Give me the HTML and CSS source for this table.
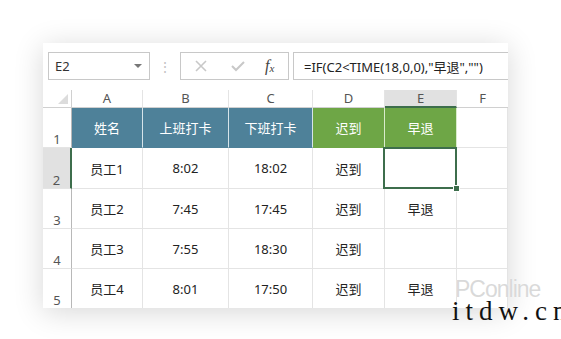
FILE: index.html
```html
<!DOCTYPE html>
<html lang="zh-CN">
<head>
  <meta charset="UTF-8">
  <title>迟到早退</title>
  <link rel="stylesheet" href="styles.css">
</head>
<body>
  <div class="sheet">
    <div class="toolbar">
      <div class="name-box">
        <span>E2</span>
        <span class="name-box__arrow"></span>
      </div>
      <div class="toolbar__dots">⋮</div>
      <div class="fx-buttons">
        <svg class="fx-buttons__icon" width="14" height="14" viewBox="0 0 14 14">
          <path d="M2 2 L12 12 M12 2 L2 12" stroke="#c8c8c8" stroke-width="1.6" fill="none"/>
        </svg>
        <svg class="fx-buttons__icon" width="16" height="14" viewBox="0 0 16 14">
          <path d="M2 7 L6 11 L14 3" stroke="#c8c8c8" stroke-width="2" fill="none"/>
        </svg>
        <span class="fx-buttons__fx">f<sub>x</sub></span>
      </div>
      <div class="formula">=IF(C2&lt;TIME(18,0,0),"早退","")</div>
    </div>

    <div class="grid">
      <div class="corner"><span class="corner__tri"></span></div>
      <div class="col-head">A</div>
      <div class="col-head">B</div>
      <div class="col-head">C</div>
      <div class="col-head">D</div>
      <div class="col-head col-head--active">E</div>
      <div class="col-head col-head--last">F</div>

      <div class="row-head">1</div>
      <div class="cell cell--blue">姓名</div>
      <div class="cell cell--blue">上班打卡</div>
      <div class="cell cell--blue">下班打卡</div>
      <div class="cell cell--green">迟到</div>
      <div class="cell cell--green">早退</div>
      <div class="cell"></div>

      <div class="row-head row-head--active">2</div>
      <div class="cell">员工1</div>
      <div class="cell">8:02</div>
      <div class="cell">18:02</div>
      <div class="cell">迟到</div>
      <div class="cell cell--selected"></div>
      <div class="cell"></div>

      <div class="row-head">3</div>
      <div class="cell">员工2</div>
      <div class="cell">7:45</div>
      <div class="cell">17:45</div>
      <div class="cell">迟到</div>
      <div class="cell">早退</div>
      <div class="cell"></div>

      <div class="row-head">4</div>
      <div class="cell">员工3</div>
      <div class="cell">7:55</div>
      <div class="cell">18:30</div>
      <div class="cell">迟到</div>
      <div class="cell"></div>
      <div class="cell"></div>

      <div class="row-head">5</div>
      <div class="cell">员工4</div>
      <div class="cell">8:01</div>
      <div class="cell">17:50</div>
      <div class="cell">迟到</div>
      <div class="cell">早退</div>
      <div class="cell"></div>
    </div>
  </div>

  <div class="watermark">
    <div class="watermark__logo">PConline</div>
    <div class="watermark__site">itdw.cn</div>
  </div>
</body>
</html>
```

FILE: styles.css
```css
:root {
  --grid-line: #e4e4e4;
  --head-line: #d0d0d0;
  --head-text: #555;
  --cell-text: #222;
  --blue-fill: #4e8199;
  --green-fill: #6ea646;
  --select: #3d6e4c;
  --active-head: #e1e1e1;
}

body {
  margin: 0;
  background: #fff;
  font-family: "Noto Sans", "Noto Sans CJK SC", sans-serif;
  width: 561px;
  height: 339px;
  overflow: hidden;
  position: relative;
}

.sheet {
  margin: 43px 0 0 43px;
  width: 465px;
  height: 265px;
  background: #fff;
  box-shadow: 0 4px 28px rgba(0, 0, 0, 0.16);
  overflow: hidden;
}

/* formula bar */
.toolbar {
  display: flex;
  align-items: center;
  height: 28px;
  padding: 9px 0 10px 5px;
}

.name-box {
  width: 102px;
  height: 28px;
  box-sizing: border-box;
  border: 1px solid #c8c8c8;
  display: flex;
  align-items: center;
  justify-content: space-between;
  padding: 0 7px 0 6px;
  font-size: 13px;
  color: #333;
}

.name-box__arrow {
  width: 0;
  height: 0;
  border-left: 4px solid transparent;
  border-right: 4px solid transparent;
  border-top: 4px solid #777;
}

.toolbar__dots {
  width: 30px;
  text-align: center;
  color: #c4c4c4;
  font-size: 14px;
}

.fx-buttons {
  width: 109px;
  height: 28px;
  box-sizing: border-box;
  border: 1px solid #c8c8c8;
  display: flex;
  align-items: center;
  padding-left: 13px;
  gap: 22px;
}

.fx-buttons__fx {
  font-family: "Liberation Serif", serif;
  font-style: italic;
  font-size: 16px;
  color: #444;
  margin-left: -3px;
}

.fx-buttons__fx sub {
  font-size: 11px;
  vertical-align: -1px;
}

.formula {
  flex: 1;
  height: 28px;
  box-sizing: border-box;
  border: 1px solid #c8c8c8;
  border-right: none;
  margin-left: 4px;
  padding-left: 10px;
  display: flex;
  align-items: center;
  font-size: 13px;
  color: #222;
  white-space: nowrap;
}

/* sheet grid */
.grid {
  display: grid;
  grid-template-columns: 29px 71px 86px 84px 72px 72px 51px;
  grid-template-rows: 18px 40px 41px 40px 40px 40px;
}

.corner {
  border-right: 1px solid var(--head-line);
  border-bottom: 1px solid var(--head-line);
  position: relative;
}

.corner__tri {
  position: absolute;
  right: 3px;
  bottom: 3px;
  width: 0;
  height: 0;
  border-left: 10px solid transparent;
  border-bottom: 10px solid #dcdcdc;
}

.col-head {
  border-right: 1px solid var(--grid-line);
  border-bottom: 1px solid var(--head-line);
  font-size: 13px;
  color: var(--head-text);
  display: flex;
  align-items: center;
  justify-content: center;
  line-height: 1;
}

.col-head--active {
  background: var(--active-head);
  border-bottom: 2px solid var(--select);
}

.col-head--last {
  border-right: none;
}

.row-head {
  border-right: 1px solid #b8b8b8;
  border-bottom: 1px solid var(--grid-line);
  font-size: 13px;
  color: var(--head-text);
  display: flex;
  align-items: flex-end;
  justify-content: center;
  padding-bottom: 1px;
  line-height: 1;
}

.row-head--active {
  background: var(--active-head);
  border-right: 2px solid var(--select);
}

.cell {
  border-right: 1px solid var(--grid-line);
  border-bottom: 1px solid var(--grid-line);
  font-size: 13px;
  color: var(--cell-text);
  display: flex;
  align-items: center;
  justify-content: center;
}

.cell--blue {
  background: var(--blue-fill);
  color: #fff;
  border-right-color: #d6e4ea;
  border-bottom-color: var(--blue-fill);
}

.cell--green {
  background: var(--green-fill);
  color: #fff;
  border-right-color: #d9ebcc;
  border-bottom-color: var(--green-fill);
}

.cell--selected {
  position: relative;
}

.cell--selected::before {
  content: "";
  position: absolute;
  left: -2px;
  top: -1px;
  right: -1px;
  bottom: -1px;
  border: 2px solid var(--select);
}

.cell--selected::after {
  content: "";
  position: absolute;
  right: -4px;
  bottom: -4px;
  width: 5px;
  height: 5px;
  background: var(--select);
  border: 1px solid #fff;
}

/* site watermark */
.watermark {
  position: absolute;
  left: 452px;
  top: 279px;
}

.watermark__logo {
  margin-left: 3px;
  font-family: "Liberation Sans", sans-serif;
  font-size: 23px;
  color: rgba(205, 205, 205, 0.75);
  text-shadow: 0 0 1px #fff;
  letter-spacing: -1px;
  line-height: 20px;
}

.watermark__site {
  font-family: "Liberation Serif", serif;
  font-size: 27px;
  color: #111;
  letter-spacing: 6px;
  line-height: 30px;
  margin-top: -3px;
  white-space: nowrap;
}
```
